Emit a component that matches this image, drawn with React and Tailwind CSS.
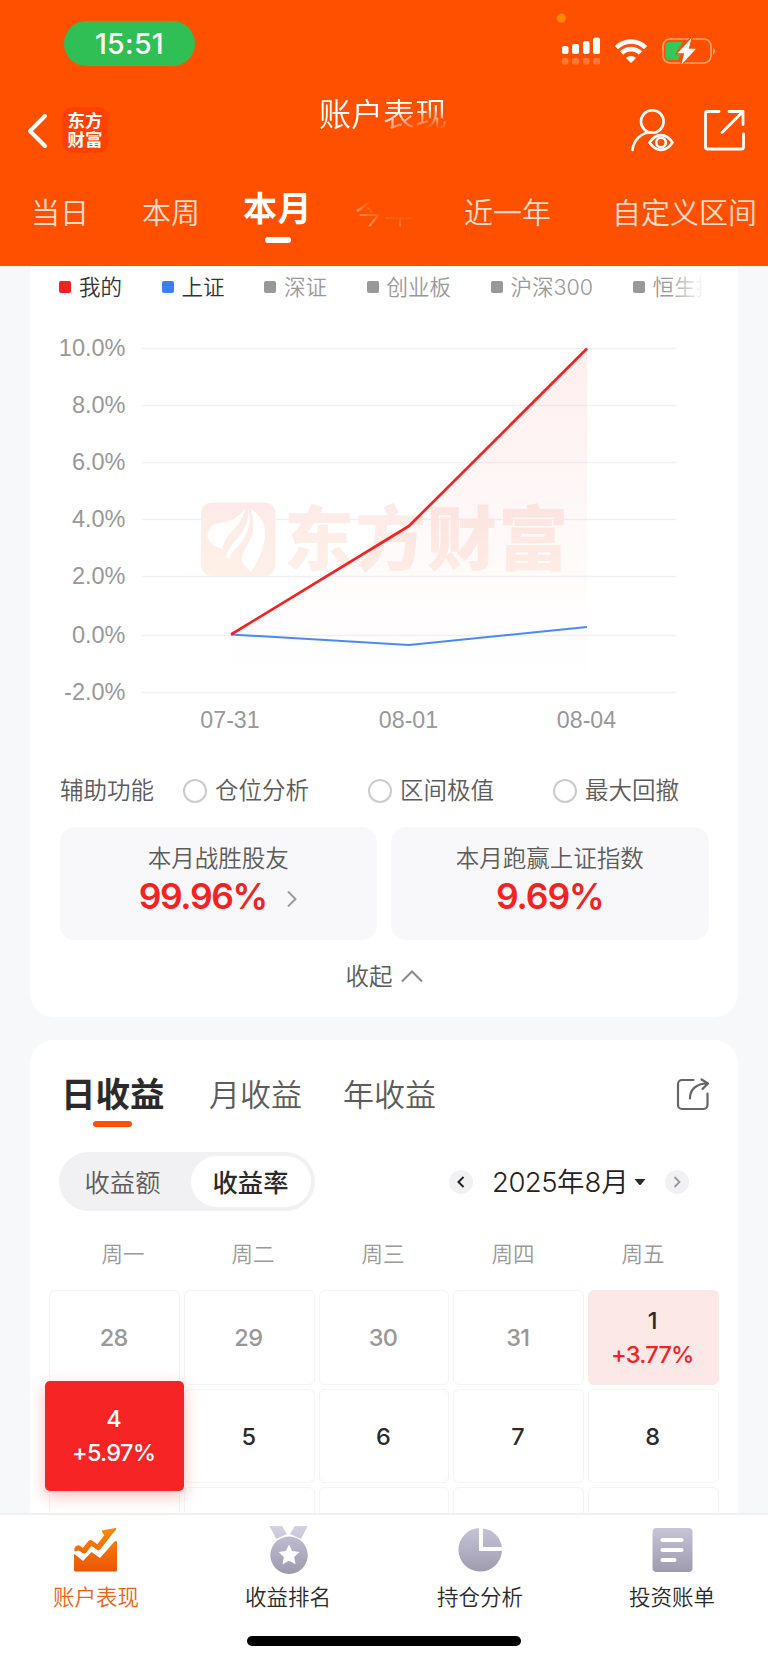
import React, { useState } from 'react';
import clsx from 'clsx';

const LEGEND = [
  { name: '我的', dot: 'bg-[#f62222]', text: 'text-[#333]' },
  { name: '上证', dot: 'bg-[#3a80f0]', text: 'text-[#333]' },
  { name: '深证', dot: 'bg-[#999]', text: 'text-[#999]' },
  { name: '创业板', dot: 'bg-[#999]', text: 'text-[#999]' },
  { name: '沪深300', dot: 'bg-[#999]', text: 'text-[#999]' },
  { name: '恒生指', dot: 'bg-[#999]', text: 'text-[#999]' },
];

const GRID = [
  { label: '10.0%', y: 348.5 },
  { label: '8.0%', y: 405.5 },
  { label: '6.0%', y: 462.5 },
  { label: '4.0%', y: 519.5 },
  { label: '2.0%', y: 576.5 },
  { label: '0.0%', y: 635.5 },
  { label: '-2.0%', y: 692.5 },
];

const DAYS = [
  { day: 28, muted: true },
  { day: 29, muted: true },
  { day: 30, muted: true },
  { day: 31, muted: true },
  { day: 1, rate: '+3.77%' },
  { day: 4, rate: '+5.97%', selected: true },
  { day: 5 },
  { day: 6 },
  { day: 7 },
  { day: 8 },
  {},
  {},
  {},
  {},
  {},
];

const StatusBar = () => (
  <div className="flex h-[84px] items-start justify-between pl-16 pr-[51px] pt-[21px]">
    <div className="flex h-[45px] w-[131px] items-center justify-center rounded-full bg-[#2fbf55] text-[28.5px] font-medium leading-[46px] tracking-[0.3px] text-white">
      15:51
    </div>
    <svg width="164" height="54" viewBox="553 13 164 54" className="-mt-2" fill="#fff">
      <circle cx="561.3" cy="18" r="4.6" fill="#ff8a00" />
      <rect x="562" y="46" width="6.5" height="8" rx="2" />
      <rect x="572" y="44" width="7" height="10" rx="2" />
      <rect x="583" y="41" width="6.5" height="13" rx="2" />
      <rect x="593" y="37.5" width="7" height="16.5" rx="2" />
      <g opacity="0.22">
        <rect x="562" y="58" width="6.5" height="6.5" rx="2" />
        <rect x="572" y="58" width="7" height="6.5" rx="2" />
        <rect x="583" y="58" width="6.5" height="6.5" rx="2" />
        <rect x="593" y="58" width="7" height="6.5" rx="2" />
      </g>
      <g fill="none" stroke="#fff" strokeWidth="4.6">
        <path d="M616.4 47.6a20.8 20.8 0 0 1 29.2 0" />
        <path d="M621.6 53a13.4 13.4 0 0 1 18.8 0" />
      </g>
      <path d="M631 63l-5-5a7.2 7.2 0 0 1 10 0z" />
      <rect x="663" y="39" width="48" height="24" rx="7" fill="none" stroke="#fff" strokeOpacity="0.45" strokeWidth="1.7" />
      <path d="M713 47.5a4.5 4.5 0 0 1 0 7.5z" opacity="0.5" />
      <path d="M669.5 42H683l-7 10.5h5l-3 7.5h-8.5a4 4 0 0 1-4-4v-10a4 4 0 0 1 4-4z" fill="#34c759" />
      <path d="M691.5 38l-14 15.3h6.6L681.5 64.5l14.5-15.8h-7.2z" stroke="#ff5000" strokeWidth="2.5" paintOrder="stroke" />
    </svg>
  </div>
);

const Header = ({ range, setRange }) => {
  const ranges = [
    { name: '当日', box: 'w-[111px]' },
    { name: '本周', box: 'w-[101px]' },
    { name: '本月', box: 'w-[112px]' },
    { name: '今年', box: 'w-[109px]', fade: true },
    { name: '近一年', box: 'w-[148px]' },
    { name: '自定义区间', box: 'w-[150px]' },
  ];
  return (
    <header className="h-[266px] shrink-0 overflow-hidden bg-[#ff5000] text-white">
      <StatusBar />
      <div className="flex h-[92px] items-start pl-[27px] pr-[23px]">
        <svg width="22" height="36" viewBox="0 0 22 36" className="mt-[29px]" fill="none" stroke="#fff" strokeWidth="4" strokeLinecap="round" strokeLinejoin="round">
          <path d="M18 3L3 18l15 15" />
        </svg>
        <div className="ml-[13px] mt-[23px] flex h-[46px] w-[46px] flex-col items-center justify-center rounded-[10px] bg-[#ff4200] text-[17.5px] font-bold leading-[19px]">
          <span>东方</span>
          <span>财富</span>
        </div>
        <h1 className="ml-[211px] mt-[13px] w-[128px] whitespace-nowrap text-[32px] font-[350] leading-[36px] [mask-image:radial-gradient(90px_36px_at_115px_46px,transparent_40%,black_95%)]">
          账户表现
        </h1>
        <div className="ml-auto mt-[24px] flex items-center gap-[29px]">
          <svg width="44" height="44" viewBox="631 108 44 44" fill="none" stroke="#fff" strokeWidth="2.6" strokeLinecap="round">
            <circle cx="652.3" cy="121.5" r="11.3" />
            <path d="M632.5 150c1-10 8.500-17.500 19-17.800" />
            <path d="M649.5 142.5c6.500-9.800 16.500-9.800 23 0-6.500 9.800-16.500 9.800-23 0z" />
            <circle cx="661" cy="142.5" r="4.800" />
          </svg>
          <svg width="41" height="41" viewBox="704 110 41 41" fill="none" stroke="#fff" strokeWidth="2.8" strokeLinecap="round" strokeLinejoin="round">
            <path d="M719 111.5h-11.500a2 2 0 0 0-2 2v33.500a2 2 0 0 0 2 2h34a2 2 0 0 0 2-2v-13" />
            <path d="M729 111.500h14v13M743 111.500l-21 21" />
          </svg>
        </div>
      </div>
      <nav className="flex h-[90px] pl-[31px]">
        {ranges.map((r) => (
          <button
            key={r.name}
            onClick={() => setRange(r.name)}
            className={clsx(
              'flex shrink-0 flex-col items-start whitespace-nowrap',
              r.box,
              r.name === range ? 'pt-[14px] text-[34px] font-bold leading-[38px] tracking-[0.5px]' : 'pt-[19px] text-[29px] font-[350] leading-[38px] text-[#ffdccc]'
            )}
          >
            <span className={clsx(r.fade && '[mask-image:radial-gradient(66px_46px_at_46px_-2px,transparent_50%,black_115%)]')}>{r.name}</span>
            {r.name === range && <span className="ml-[22px] mt-[9px] h-1.5 w-[26px] rounded-full bg-white" />}
          </button>
        ))}
      </nav>
    </header>
  );
};

const Chart = () => (
  <svg width="708" height="440" viewBox="30 310 708 440" className="block">
    <defs>
      <linearGradient id="area" x1="0" y1="0" x2="0" y2="1">
        <stop offset="0" stopColor="#f62222" stopOpacity="0.075" />
        <stop offset="0.75" stopColor="#f62222" stopOpacity="0.01" />
        <stop offset="1" stopColor="#f62222" stopOpacity="0" />
      </linearGradient>
      <linearGradient id="mark" x1="0" y1="0" x2="0" y2="1">
        <stop offset="0" stopColor="#fdeae8" />
        <stop offset="1" stopColor="#fef0e7" />
      </linearGradient>
    </defs>
    {GRID.map((g) => (
      <g key={g.label}>
        <line x1="142" x2="676.5" y1={g.y} y2={g.y} stroke="#eff1f5" strokeWidth="1.3" />
        <text x="125.5" y={g.y + 7} textAnchor="end" fontSize="23.5" fill="#999" className="font-['Liberation_Sans']">
          {g.label}
        </text>
      </g>
    ))}
    {/* watermark */}
    <rect x="201" y="502.5" width="74.5" height="73.5" rx="11" fill="url(#mark)" />
    <path d="M207.500 537c0-9 4-13 12-14 12-1.500 19-6 26-14-3 10-7 16-14 23-6 6-8 11-9 17-7-2-13-5-15-12z" fill="#fff" />
    <path d="M248 508c2 13-4 23-13 33-5 6-8 11-9 16l4 2c1-6 4-9 9-14 9-10 13-22 9-37z" fill="#fff" />
    <path d="M250.500 509c13 7 17 20 13.500 33-2 10-6 20-13 30-4-4-9-8-9-13 0-6 4-11 7-17 5-10 6-21 1.500-33z" fill="#fff" />
    <text x="284" y="565" fontSize="70" fontWeight="900" letterSpacing="1.4" fill="url(#mark)">
      东方财富
    </text>
    <path d="M231 634.500L409 526L587 348V692H231z" fill="url(#area)" />
    <path d="M231 634.500L409 645L587 627" fill="none" stroke="#4a8af4" strokeWidth="2" strokeLinejoin="round" />
    <path d="M231 634.500L409 526L587 348.500" fill="none" stroke="#f62222" strokeWidth="2.7" strokeLinejoin="round" />
    <g fontSize="23.2" fill="#999" textAnchor="middle" className="font-['Liberation_Sans']">
      <text x="230" y="728">07-31</text>
      <text x="408.500" y="728">08-01</text>
      <text x="586.500" y="728">08-04</text>
    </g>
  </svg>
);

const PerformanceCard = () => {
  const [checked, setChecked] = useState('');
  return (
    <section className="mx-[30px] h-[751px] shrink-0 rounded-b-[24px] bg-white">
      <div className="relative flex h-11 overflow-hidden whitespace-nowrap pl-[29px]">
        <div className="flex w-[643px] gap-[39.5px] overflow-hidden">
          {LEGEND.map((l) => (
            <div key={l.name} className={clsx('flex h-[42px] shrink-0 items-center text-[21.5px] font-[350] leading-[30px]', l.text)}>
              <i className={clsx('mr-2 h-3 w-3 rounded-[2px]', l.dot)} />
              {l.name}
            </div>
          ))}
        </div>
        <div className="absolute left-[638px] top-0 h-11 w-[36px] bg-linear-to-r from-white/0 to-white" />
      </div>
      <Chart />
      <div className="flex h-[77px] items-center pl-[30px] pt-[4px] text-[23.5px] font-[350] leading-[30px] text-[#5c5c5c]">
        <span className="w-[123px]">辅助功能</span>
        {['仓位分析', '区间极值', '最大回撤'].map((name) => (
          <label key={name} className="flex w-[185px] items-center gap-2" onClick={() => setChecked(name)}>
            <span className={clsx('h-6 w-6 rounded-full border-2', checked === name ? 'border-[#ff5000]' : 'border-[#ccc]')} />
            {name}
          </label>
        ))}
      </div>
      <div className="flex gap-[14px] px-[29.5px] text-center">
        <div className="h-[113px] flex-1 rounded-[15px] bg-[#f8f8fa] pt-[15px]">
          <p className="text-[23.5px] font-[350] leading-[34px] text-[#5c5c5c]">本月战胜股友</p>
          <p className="flex items-center justify-center text-[35.5px] font-semibold leading-[42px] tracking-[-1.4px] text-[#f62222]">
            99.96%
            <svg width="10" height="16" viewBox="0 0 10 16" className="ml-[20px] mr-px mt-1" fill="none" stroke="#999" strokeWidth="1.9">
              <path d="M1 0.5L8.500 8 1 15.500" />
            </svg>
          </p>
        </div>
        <div className="h-[113px] flex-1 rounded-[15px] bg-[#f8f8fa] pt-[15px]">
          <p className="text-[23.5px] font-[350] leading-[34px] text-[#5c5c5c]">本月跑赢上证指数</p>
          <p className="text-[35.5px] font-semibold leading-[42px] tracking-[-1.1px] text-[#f62222]">9.69%</p>
        </div>
      </div>
      <button className="flex h-[74px] w-full items-center justify-center gap-2 text-[23.5px] font-[350] text-[#5c5c5c]">
        收起
        <svg width="22" height="12" viewBox="0 0 22 12" className="-mt-0.5" fill="none" stroke="#888" strokeWidth="2">
          <path d="M1 11.5L11 1.500l10 10" />
        </svg>
      </button>
    </section>
  );
};

const DayCell = ({ cell }) => {
  if (cell.selected) {
    return (
      <div className="relative z-10 -mx-[4px] -mb-[8px] -mt-[8px] flex flex-col items-center justify-center rounded-[5px] bg-[#f62424] pt-px pr-0.5 text-white shadow-[0_5px_16px_rgba(246,36,36,0.3)]">
        <span className="leading-[34px]">{cell.day}</span>
        <span className="leading-[34px]">{cell.rate}</span>
      </div>
    );
  }
  return (
    <div
      className={clsx(
        'flex flex-col items-center justify-center rounded-[6px] pr-0.5 pt-[2px]',
        cell.rate ? 'bg-[#fde8e8]' : 'border border-[#f4f4f5]',
        cell.muted ? 'text-[#999]' : 'text-[#2a2a2a]'
      )}
    >
      <span className="leading-[34px]">{cell.day}</span>
      {cell.rate && <span className="leading-[34px] text-[#f62222]">{cell.rate}</span>}
    </div>
  );
};

const CalendarCard = () => {
  const [mode, setMode] = useState('收益率');
  return (
    <section className="mx-[30px] mt-[23px] h-[473px] shrink-0 overflow-hidden rounded-t-[24px] bg-white">
      <div className="flex h-[112px] items-start whitespace-nowrap pl-[31px] pr-[28px] pt-[34px]">
        <div className="w-[148px] text-[34.5px] font-bold leading-[42px] text-[#2a2a2a]">
          日收益
          <div className="ml-[32px] mt-[5px] h-1.5 w-[39px] rounded-full bg-[#ff5000]" />
        </div>
        <div className="w-[134px] text-[31px] font-[350] leading-[42px] text-[#5c5c5c]">月收益</div>
        <div className="text-[31px] font-[350] leading-[42px] text-[#5c5c5c]">年收益</div>
        <svg width="34" height="34" viewBox="676 1077.5 34 34" className="ml-auto mt-[3px]" fill="none" stroke="#666" strokeWidth="2.2" strokeLinecap="round" strokeLinejoin="round">
          <path d="M693.5 1080.5H682a4 4 0 0 0-4 4V1105.500a4 4 0 0 0 4 4h21.500a4 4 0 0 0 4-4V1094" />
          <path d="M690 1099c0-9 6-15 17.500-15M701.500 1080l6.500 4-5.500 5.500" />
        </svg>
      </div>
      <div className="flex h-[59px] items-center pl-[29px] pr-[49px]">
        <div className="flex h-[59px] w-[256px] items-center rounded-full bg-[#f1f1f4] pr-1 text-[25.3px] leading-[53px]">
          {['收益额', '收益率'].map((m) => (
            <button
              key={m}
              onClick={() => setMode(m)}
              className={clsx('h-[51px] rounded-full', m === mode ? 'w-[120px] bg-white pr-px font-medium text-[#2a2a2a]' : 'w-[132px] pr-[5px] font-[350] text-[#5c5c5c]')}
            >
              {m}
            </button>
          ))}
        </div>
        <div className="ml-auto flex items-center">
          <span className="flex h-6 w-6 items-center justify-center rounded-full bg-[#f1f1f4]">
            <svg width="8" height="12" viewBox="0 0 8 12" fill="none" stroke="#222" strokeWidth="2">
              <path d="M6.500 1L1.500 6l5 5" />
            </svg>
          </span>
          <span className="ml-[19px] w-[137px] whitespace-nowrap text-[27.5px] font-[350] leading-[40px] text-[#222]">
            <span className="tracking-[-0.5px]">2025</span>年8月
          </span>
          <svg width="12" height="7" viewBox="0 0 12 7" className="ml-[5px] mt-0.5" fill="#2a2a2a">
            <path d="M0.5 0h11L7 5.500q-1 1-2 0z" />
          </svg>
          <span className="ml-[19px] flex h-6 w-6 items-center justify-center rounded-full bg-[#f1f1f4]">
            <svg width="8" height="12" viewBox="0 0 8 12" fill="none" stroke="#999" strokeWidth="1.8">
              <path d="M1.500 1l5 5-5 5" />
            </svg>
          </span>
        </div>
      </div>
      <div className="grid h-[79px] grid-cols-5 items-center pl-[28px] pr-[30px] pt-2 text-center text-[21.5px] font-[350] text-[#999]">
        {['周一', '周二', '周三', '周四', '周五'].map((w) => (
          <span key={w}>{w}</span>
        ))}
      </div>
      <div className="grid auto-rows-[94.5px] grid-cols-5 gap-[4px] px-[19.3px] text-[23.5px] font-medium tracking-[-0.7px]">
        {DAYS.map((cell, i) => (
          <DayCell key={i} cell={cell} />
        ))}
      </div>
    </section>
  );
};

const TABS = [
  {
    name: '账户表现',
    active: true,
    icon: (
      <g fill="url(#hot)">
        <path d="M4.800 27.500q-1.500-2.500.5-4.800 2.500-2.700 5-.7l2.500 2 5.200-6.500q2.200-2.500 4.800-.5l4.500 3.300 7-9-2.300-3.300q-.5-1.500 1-1.700L45.500 4q1.500 0 .7 1.500L41.500 11 31 24.500q-2.200 2.800-4.700.8l-5-3.300-5 6.500q-1.800 2-3.800.5l-3.500-2.500z" />
        <path d="M4 30.500q.5-.5 1.200 0L13 37l8.500-9 8.500 6L44.500 17.500q2.500-1.500 2.500 1V46q0 1.500-1.500 1.500h-40Q4 47.500 4 46z" />
      </g>
    ),
  },
  {
    name: '收益排名',
    icon: (
      <g fill="url(#cool)">
        <path d="M7.500 2H20l4.800 8-10.500 5zM45.500 2H33l-5 8 11 5z" opacity="0.8" />
        <path
          fillRule="evenodd"
          d="M27 12.500a18.700 18.700 0 1 0 .1 0zM27 20.500l3.200 6.500 7.200 1-5.200 5 1.300 7.200-6.500-3.400-6.500 3.400 1.300-7.200-5.200-5 7.200-1z"
        />
      </g>
    ),
  },
  {
    name: '持仓分析',
    icon: (
      <g fill="url(#cool)">
        <path d="M25 4A21.800 21.800 0 1 0 48 27H25z" />
        <path d="M29 4.500A21 21 0 0 1 47.800 23H29z" />
      </g>
    ),
  },
  {
    name: '投资账单',
    icon: (
      <>
        <rect x="6.5" y="4" width="40" height="44" rx="4" fill="url(#cool)" />
        <path d="M16.500 16h19M16.500 26h19M16.500 36h12" stroke="#fff" strokeWidth="4" strokeLinecap="round" />
      </>
    ),
  },
];

const TabBar = () => (
  <footer className="h-[150px] shrink-0 border-t-2 border-[#f0f0f2] bg-white">
    <div className="grid h-[121px] grid-cols-4">
      {TABS.map((t) => (
        <div key={t.name} className={clsx('flex flex-col items-center pt-[9px] text-[21.5px] font-[350]', t.active ? 'text-[#f26210]' : 'text-[#2a2a2a]')}>
          <svg width="52" height="52" viewBox="0 0 52 52">
            <defs>
              <linearGradient id="hot" gradientUnits="userSpaceOnUse" x1="0" y1="4" x2="0" y2="48">
                <stop offset="0" stopColor="#f98a09" />
                <stop offset="1" stopColor="#ea5504" />
              </linearGradient>
              <linearGradient id="cool" gradientUnits="userSpaceOnUse" x1="0" y1="2" x2="0" y2="50">
                <stop offset="0" stopColor="#c8c5da" />
                <stop offset="1" stopColor="#9c9aab" />
              </linearGradient>
            </defs>
            {t.icon}
          </svg>
          <span className="mt-[5px] leading-[32px]">{t.name}</span>
        </div>
      ))}
    </div>
    <div className="mx-auto h-2.5 w-[274px] rounded-full bg-black" />
  </footer>
);

const App = () => {
  const [range, setRange] = useState('本月');

  return (
    <div className="flex h-[1663px] w-[768px] flex-col overflow-hidden bg-[#f7f8fa] font-[Inter,'Noto_Sans_CJK_SC',sans-serif]">
      <Header range={range} setRange={setRange} />
      <PerformanceCard />
      <CalendarCard />
      <TabBar />
    </div>
  );
};

export default App;
